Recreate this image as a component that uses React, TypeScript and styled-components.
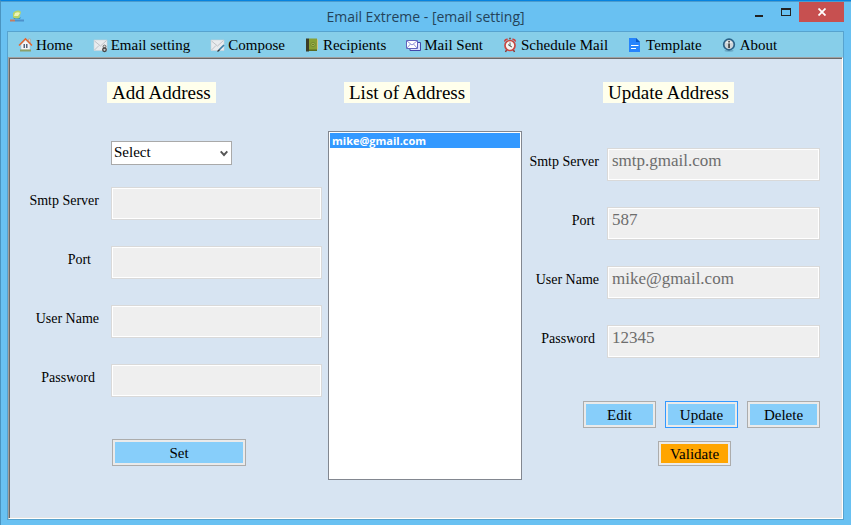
import React from "react";
import styled, { createGlobalStyle } from "styled-components";

const serif = `"Liberation Serif", "Times New Roman", serif`;
const sans = `"Open Sans", "Noto Sans", sans-serif`;

const GlobalStyle = createGlobalStyle`
  *, *::before, *::after { box-sizing: border-box; }
  html, body { margin: 0; padding: 0; }
  body { background: #69c1f2; font-family: ${serif}; color: #000; }
  button, input, select { font-family: inherit; color: inherit; margin: 0; }
`;

const Window = styled.div`
  display: flex;
  flex-direction: column;
  min-height: 100vh;
  padding: 0 7px 6px 6px;
  background: #69c1f2;
  border-left: 1px solid #4a94c0;
  border-top: 1px solid #0683e0;
  box-shadow: inset 0 1px #4c9cce;
`;

const TitleBar = styled.header`
  display: grid;
  grid-template-columns: 1fr auto 1fr;
  align-items: start;
  height: 30px;
  padding-top: 1px;
`;

const Title = styled.h1`
  margin: 0;
  font: 400 14px/29px ${sans};
  color: #24435a;
`;

const AppLogo = styled.svg`
  width: 16px;
  height: 16px;
  margin: 6px 0 0 2px;
`;

const WindowControls = styled.div`
  display: flex;
  justify-content: flex-end;
`;

const ControlButton = styled.button<{ $close?: boolean }>`
  display: flex;
  align-items: center;
  justify-content: center;
  width: ${(p) => (p.$close ? 45 : 27)}px;
  height: 20px;
  padding: 0;
  border: 0;
  background: ${(p) => (p.$close ? "#c75050" : "transparent")};
`;

const Client = styled.div`
  flex: 1;
  display: flex;
  flex-direction: column;
  border: 1px solid #57a3cf;
`;

const MenuBar = styled.nav`
  display: flex;
  gap: 20px;
  height: 25px;
  padding: 0 10px;
  background: #87cee9;
`;

const MenuItem = styled.button`
  display: flex;
  align-items: center;
  gap: 2px;
  padding: 0;
  border: 0;
  background: none;
  font-size: 15px;
  line-height: 20px;
  white-space: nowrap;
`;

const Icon = styled.svg`
  width: 16px;
  height: 16px;
  flex: none;
`;

const Panel = styled.main`
  flex: 1;
  display: grid;
  grid-template-columns: 294fr 194fr 292fr;
  column-gap: 6px;
  padding: 24px 22px 38px 19px;
  align-items: start;
  background: #d7e4f2;
  border: 1px solid;
  border-color: #a0a0a0 #fff #fff #a0a0a0;
  box-shadow: inset 1px 1px #696969, inset -1px -1px #e3e3e3;
`;

const Column = styled.section`
  display: flex;
  flex-direction: column;
  align-items: stretch;
  min-width: 0;
`;

const Heading = styled.h2<{ $indent: number }>`
  align-self: flex-start;
  margin: 0 0 0 ${(p) => p.$indent}px;
  padding: 0 5px;
  background: #ffffec;
  font-size: 19px;
  font-weight: 400;
  line-height: 21px;
  white-space: nowrap;
`;

const ProviderWrap = styled.div`
  display: grid;
  width: 121px;
  margin: 38px 0 22px 83px;
  align-items: center;
`;

const Provider = styled.select`
  grid-area: 1 / 1;
  height: 24px;
  padding: 0 2px 2px;
  border: 1px solid #a9a9a9;
  border-radius: 0;
  background: #fff;
  font-size: 15px;
  appearance: none;
`;

const Arrow = styled.svg`
  grid-area: 1 / 1;
  justify-self: end;
  width: 8px;
  height: 7px;
  margin-right: 4px;
  pointer-events: none;
`;

const Fields = styled.div<{ $top: number }>`
  display: flex;
  flex-direction: column;
  gap: 26px;
  margin-top: ${(p) => p.$top}px;
`;

const FieldRow = styled.div<{ $labelWidth: number }>`
  display: grid;
  grid-template-columns: ${(p) => p.$labelWidth}px 1fr;
`;

const Label = styled.label<{ $gap: number }>`
  padding: 4px ${(p) => p.$gap}px 0 0;
  font-size: 14px;
  line-height: 20px;
  text-align: right;
  white-space: nowrap;
`;

const TextBox = styled.input`
  min-width: 0;
  width: 100%;
  height: 33px;
  padding: 0 4px 8px;
  border: 1px solid #d9d9d9;
  border-radius: 0;
  background: #efefef;
  box-shadow: inset 0 0 0 1px #fff;
  font-size: 17px;
  color: #6d6d6d;
`;

const AddressList = styled.ul`
  height: 349px;
  margin: 28px 0 0;
  padding: 1px;
  list-style: none;
  background: #fff;
  border: 1px solid #828790;
`;

const AddressItem = styled.li`
  padding: 0 2px;
  background: #3399ff;
  color: #fff;
  font: 700 11px/15px ${sans};
`;

const Button = styled.button<{ $tone?: "blue" | "orange"; $focused?: boolean; $wide?: boolean }>`
  width: ${(p) => (p.$wide ? 134 : 73)}px;
  height: ${(p) => (p.$tone === "orange" ? 25 : 27)}px;
  padding: 0;
  border: 1px solid ${(p) => (p.$focused ? "#3399ff" : "#acacac")};
  border-radius: 0;
  background: ${(p) => (p.$tone === "orange" ? "#ffa500" : "#87cefa")};
  box-shadow: inset 0 0 0 2px #eaeaea;
  font-size: 15px;
  line-height: 20px;
`;

const SetRow = styled.div`
  display: flex;
  margin: 42px 0 0 84px;
`;

const Actions = styled.div`
  display: flex;
  justify-content: flex-end;
  gap: 9px;
  margin-top: 43px;
`;

const ValidateRow = styled.div`
  display: flex;
  justify-content: flex-end;
  margin-top: 13px;
  padding-right: 89px;
`;

const HomeIcon = () => (
  <Icon viewBox="0 0 16 16" aria-hidden="true">
    <path d="M3 7.500 7.500 3l4.500 4.500V13H3z" fill="#f6f6f8" stroke="#b9c2cb" strokeWidth=".6" />
    <path d="M2 12.500h11v2H2z" fill="#8ba06a" />
    <path d="M10.500 2h1.800v4l-1.800-2z" fill="#e4e0dc" stroke="#b08a7a" strokeWidth=".5" />
    <path d="M1 8.500 7.500 1.800 14 8.500" fill="none" stroke="#e8632a" strokeWidth="1.400" />
    <path d="M5.500 7H7v4H5.500zM8 7h1.500v4H8z" fill="#53627c" />
  </Icon>
);

const Envelope = () => (
  <>
    <path d="M1 3h13v10.500H1z" fill="#e9ebee" stroke="#cfd3d8" strokeWidth=".6" />
    <path d="M1.500 13 6 8.500M13.500 3.500 7.500 9 1.500 4" fill="none" stroke="#b4b8bd" strokeWidth=".8" />
  </>
);

const MailSettingIcon = () => (
  <Icon viewBox="0 0 16 16" aria-hidden="true">
    <Envelope />
    <circle cx="11.500" cy="9.500" r="1.400" fill="#ddd" stroke="#6b6b6b" strokeWidth="1" />
    <circle cx="11.500" cy="12.800" r="1.800" fill="#ccc" stroke="#444" strokeWidth="1.300" />
  </Icon>
);

const ComposeIcon = () => (
  <Icon viewBox="0 0 16 16" aria-hidden="true">
    <Envelope />
    <path d="m9 13 5-5" stroke="#3c7fa6" strokeWidth="1.700" />
    <path d="m7.500 14.500 2-1.800" stroke="#333" strokeWidth="1.200" />
  </Icon>
);

const BookIcon = () => (
  <Icon viewBox="0 0 16 16" aria-hidden="true">
    <path d="M1 1.500h3v13H1z" fill="#3b3d28" />
    <path d="M4 1.500h8v12H4z" fill="#87a035" />
    <path d="M4 12.500h8v1.500H4z" fill="#586b20" />
    <path d="M12 2.500h1v10h-1z" fill="#d5c18b" />
    <circle cx="8" cy="7.500" r="2.200" fill="#a3b94b" stroke="#6d8230" strokeWidth=".8" />
    <circle cx="8" cy="7.500" r=".8" fill="#54661f" />
  </Icon>
);

const MailSentIcon = () => (
  <Icon viewBox="0 0 16 16" aria-hidden="true">
    <path d="M4 5.500h10.500v8H4z" fill="#dfe3ff" stroke="#4346a9" />
    <path d="M.5 3.500h11v8H.5z" fill="#fff" stroke="#6064bd" />
    <path d="m1 4 5 4 5-4M1 11l3.500-4M11 11 7.500 7" fill="none" stroke="#8588d5" strokeWidth=".9" />
  </Icon>
);

const ClockIcon = () => (
  <Icon viewBox="0 0 16 16" aria-hidden="true">
    <path d="m3.500 13-1 2M10.500 13l1 2" stroke="#8d3432" strokeWidth="1.500" />
    <path d="M1 5a3 3 0 0 1 4.500-3zM13 5a3 3 0 0 0-4.500-3z" fill="#d0403b" />
    <path d="M6 1.500h2" stroke="#666" strokeWidth="1.500" />
    <circle cx="7" cy="8.500" r="5" fill="#f6f5f3" stroke="#c94742" strokeWidth="1.700" />
    <path d="M7 5.500V9l-2-1.500M7 9l2 1" fill="none" stroke="#444" strokeWidth=".9" />
  </Icon>
);

const TemplateIcon = () => (
  <Icon viewBox="0 0 16 16" aria-hidden="true">
    <path d="M1 1h7l4 4v10H1z" fill="#2684fc" />
    <path d="M8 1v4h4z" fill="#0b58c5" />
    <path d="M3 8.500h7.500M3 11.500h5" stroke="#fff" strokeWidth="1.200" />
  </Icon>
);

const AboutIcon = () => (
  <Icon viewBox="0 0 16 16" aria-hidden="true">
    <ellipse cx="7" cy="13.800" rx="4.500" ry="1" fill="#6ba9c6" />
    <circle cx="7" cy="7.500" r="5.300" fill="#cfd5d9" stroke="#2b6187" strokeWidth="1.700" />
    <path d="M3.800 6a3.500 3.500 0 0 1 6.400 0z" fill="#eef1f3" />
    <path d="M6.300 4h1.500v1.500H6.300zM6.300 6.500h1.500V11H6.300z" fill="#2d2d2d" />
  </Icon>
);

const menu = [
  { text: "Home", Glyph: HomeIcon },
  { text: "Email setting", Glyph: MailSettingIcon },
  { text: "Compose", Glyph: ComposeIcon },
  { text: "Recipients", Glyph: BookIcon },
  { text: "Mail Sent", Glyph: MailSentIcon },
  { text: "Schedule Mail", Glyph: ClockIcon },
  { text: "Template", Glyph: TemplateIcon },
  { text: "About", Glyph: AboutIcon },
];

type FieldData = { label: string; gap: number; value: string };

const addFields: FieldData[] = [
  { label: "Smtp Server", gap: 12, value: "" },
  { label: "Port", gap: 20, value: "" },
  { label: "User Name", gap: 12, value: "" },
  { label: "Password", gap: 16, value: "" },
];

const updateFields: FieldData[] = [
  { label: "Smtp Server", gap: 8, value: "smtp.gmail.com" },
  { label: "Port", gap: 12, value: "587" },
  { label: "User Name", gap: 8, value: "mike@gmail.com" },
  { label: "Password", gap: 12, value: "12345" },
];

function FieldGroup({ prefix, fields, labelWidth, top }: {
  prefix: string;
  fields: FieldData[];
  labelWidth: number;
  top: number;
}) {
  return (
    <Fields $top={top}>
      {fields.map((f) => {
        const id = `${prefix}-${f.label.replace(" ", "-").toLowerCase()}`;
        return (
          <FieldRow key={id} $labelWidth={labelWidth}>
            <Label htmlFor={id} $gap={f.gap}>{f.label}</Label>
            <TextBox id={id} type="text" defaultValue={f.value} disabled />
          </FieldRow>
        );
      })}
    </Fields>
  );
}

export default function App() {
  return (
    <>
      <GlobalStyle />
      <Window>
        <TitleBar>
          <AppLogo viewBox="0 0 16 16" aria-hidden="true">
            <path d="M4 5c3-3 6-3 8-1l-2 7-6-1z" fill="#b8d56a" />
            <path d="M6 5c2-1 4-1 5 0L9 8 5 8z" fill="#eef3b5" />
            <path d="M4 9c2 2 5 2 8 0l-1 2H5z" fill="#3d93b8" />
            <path d="M1 12.500h5" stroke="#c47d62" strokeWidth="2" />
            <path d="M6 12.500h9" stroke="#4d91cc" strokeWidth="2" />
          </AppLogo>
          <Title>Email Extreme - [email setting]</Title>
          <WindowControls>
            <ControlButton type="button" aria-label="Minimize">
              <svg width="8" height="10" viewBox="0 0 8 10"><path d="M0 8h8v2H0z" fill="#222" /></svg>
            </ControlButton>
            <ControlButton type="button" aria-label="Maximize">
              <svg width="10" height="8" viewBox="0 0 10 8"><path d="M0 0h10v8H0zM1 2v5h8V2z" fill="#222" fillRule="evenodd" /></svg>
            </ControlButton>
            <ControlButton type="button" $close aria-label="Close">
              <svg width="8" height="8" viewBox="0 0 8 8"><path d="m.5.5 7 7m0-7-7 7" stroke="#fff" strokeWidth="1.800" /></svg>
            </ControlButton>
          </WindowControls>
        </TitleBar>
        <Client>
          <MenuBar aria-label="Main">
            {menu.map(({ text, Glyph }) => (
              <MenuItem key={text} type="button"><Glyph />{text}</MenuItem>
            ))}
          </MenuBar>
          <Panel>
            <Column>
              <Heading $indent={79}>Add Address</Heading>
              <ProviderWrap>
                <Provider aria-label="Mail provider"><option>Select</option></Provider>
                <Arrow viewBox="0 0 8 7" aria-hidden="true">
                  <path d="m.7 1.300 3.300 3.700 3.300-3.700" fill="none" stroke="#555" strokeWidth="1.900" />
                </Arrow>
              </ProviderWrap>
              <FieldGroup prefix="add" fields={addFields} labelWidth={83} top={0} />
              <SetRow><Button type="button" $wide>Set</Button></SetRow>
            </Column>
            <Column>
              <Heading $indent={16}>List of Address</Heading>
              <AddressList role="listbox" aria-label="List of Address">
                <AddressItem role="option" aria-selected="true">mike@gmail.com</AddressItem>
              </AddressList>
            </Column>
            <Column>
              <Heading $indent={75}>Update Address</Heading>
              <FieldGroup prefix="update" fields={updateFields} labelWidth={79} top={45} />
              <Actions>
                <Button type="button">Edit</Button>
                <Button type="button" $focused>Update</Button>
                <Button type="button">Delete</Button>
              </Actions>
              <ValidateRow><Button type="button" $tone="orange">Validate</Button></ValidateRow>
            </Column>
          </Panel>
        </Client>
      </Window>
    </>
  );
}
